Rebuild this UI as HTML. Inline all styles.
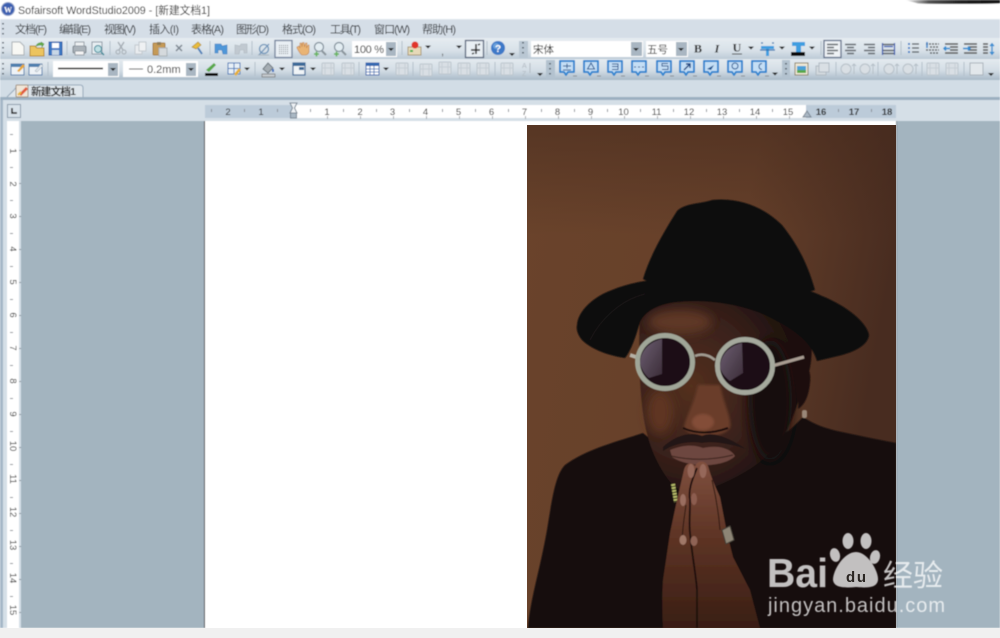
<!DOCTYPE html>
<html><head><meta charset="utf-8"><style>
html,body{margin:0;padding:0;background:#fff;width:1000px;height:638px;overflow:hidden}
svg{display:block}
text{font-family:"Liberation Sans","Noto Sans CJK SC",sans-serif}
.m{font-size:11px;fill:#26292d}
.r{font-size:9.5px;fill:#222;text-anchor:middle}
</style></head><body>
<svg width="1000" height="638" viewBox="0 0 1000 638" xmlns="http://www.w3.org/2000/svg">
<defs>
<linearGradient id="t1" x1="0" y1="0" x2="0" y2="1"><stop offset="0" stop-color="#e6ecf1"/><stop offset=".6" stop-color="#d8e1e8"/><stop offset="1" stop-color="#bccad6"/></linearGradient>
<linearGradient id="t2" x1="0" y1="0" x2="0" y2="1"><stop offset="0" stop-color="#e4eaef"/><stop offset=".55" stop-color="#d3dde5"/><stop offset="1" stop-color="#a9bac8"/></linearGradient>
<linearGradient id="bg" x1="0" y1="0" x2="1" y2="0.25"><stop offset="0" stop-color="#6a432b"/><stop offset=".6" stop-color="#66402a"/><stop offset="1" stop-color="#482c20"/></linearGradient>
<linearGradient id="topd" x1="0" y1="0" x2="0" y2="1"><stop offset="0" stop-color="#3f261b" stop-opacity=".45"/><stop offset="1" stop-color="#3f261b" stop-opacity="0"/></linearGradient>
<linearGradient id="sm" x1="0" y1="0" x2="1" y2="0"><stop offset="0" stop-color="#fff"/><stop offset=".25" stop-color="#555"/><stop offset=".6" stop-color="#222"/><stop offset="1" stop-color="#111"/></linearGradient>
<radialGradient id="skin" cx=".3" cy=".45" r=".65"><stop offset="0" stop-color="#54301f"/><stop offset=".6" stop-color="#38201a"/><stop offset="1" stop-color="#1b0f0d"/></radialGradient>
<linearGradient id="hand" x1="0" y1="0" x2="0" y2="1"><stop offset="0" stop-color="#80503f"/><stop offset=".45" stop-color="#5e3425"/><stop offset="1" stop-color="#391e14"/></linearGradient>
<linearGradient id="lens" x1="0" y1="0" x2="1" y2="1"><stop offset="0" stop-color="#6d6072"/><stop offset="1" stop-color="#3b2c38"/></linearGradient>
<filter id="b1"><feGaussianBlur stdDeviation=".55"/></filter>
<filter id="b2" x="-50%" y="-50%" width="200%" height="200%"><feGaussianBlur stdDeviation="1.300"/></filter>
<filter id="b3" x="-100%" y="-100%" width="300%" height="300%"><feGaussianBlur stdDeviation="5"/></filter>
<g id="ar"><path d="M-3 -1.500h6l-3 3z" fill="#222"/></g>
<g id="gr"><path d="M0 -6v2M0 -1v2M0 4v2" stroke="#44505c" stroke-width="1.600" stroke-dasharray="1.500 1"/></g>
<g id="cb"><path d="M-7 -7h14v11h-6l-2 3-2-3h-4z" fill="#c4def5" stroke="#2f86d0" stroke-width="2" stroke-linejoin="round"/><path d="M6 8h4" stroke="#8a8f94"/></g>
<g id="gi"><rect x="-6" y="-6" width="12" height="12" rx="1" fill="#d9dfe4" stroke="#bcc6ce"/><path d="M-3 -6v12M3 -6v12M-6 -1h12" stroke="#c6ced5"/></g>
<g id="gu"><circle cx="-2" cy="0" r="5" fill="#d9dfe4" stroke="#b5bfc7"/><path d="M6 5v-10M4 -3l2 -2 2 2" stroke="#b5bfc7" fill="none"/></g>
</defs>

<g filter="url(#b1)">
<!-- title -->
<rect width="1000" height="19" fill="#fff"/>
<path d="M905 0h95v3.500q-50 1-82 0z" fill="url(#sm)"/>
<circle cx="8" cy="9" r="6.500" fill="#3a5fb0"/><circle cx="8" cy="9" r="6.500" fill="none" stroke="#8d9fc8"/>
<text x="8" y="12.500" font-size="8" font-weight="bold" fill="#fff" text-anchor="middle" style="font-family:'Liberation Serif',serif">W</text>
<text x="18" y="14" font-size="11" fill="#1c1c1c" textLength="192" lengthAdjust="spacingAndGlyphs">Sofairsoft WordStudio2009 - [新建文档1]</text>

<!-- menu -->
<rect y="19" width="1000" height="19" fill="#d5dee7"/>
<rect y="19" width="1000" height="1" fill="#dfe6ec"/>
<use href="#gr" x="3" y="29"/>
<text class="m" x="15" y="33" textLength="32">文档(F)</text>
<text class="m" x="59" y="33" textLength="32">编辑(E)</text>
<text class="m" x="104" y="33" textLength="32">视图(V)</text>
<text class="m" x="149" y="33" textLength="30">插入(I)</text>
<text class="m" x="191" y="33" textLength="33">表格(A)</text>
<text class="m" x="236" y="33" textLength="33">图形(D)</text>
<text class="m" x="282" y="33" textLength="34">格式(O)</text>
<text class="m" x="330" y="33" textLength="31">工具(T)</text>
<text class="m" x="374" y="33" textLength="36">窗口(W)</text>
<text class="m" x="422" y="33" textLength="34">帮助(H)</text>

<!-- toolbars -->
<rect y="38" width="1000" height="21" fill="url(#t1)"/>
<rect y="59" width="1000" height="21" fill="url(#t2)"/>
<rect y="80" width="1000" height="18" fill="#d2dde6"/>
<rect y="97" width="1000" height="3" fill="#9bafc0"/>
<rect y="100" width="1000" height="21" fill="#d5dfe7"/>

<!-- row 1 -->
<use href="#gr" x="3" y="48"/>
<path d="M12 42h8l4 4v9h-12z" fill="#f8f8f4" stroke="#aab0b4"/>
<path d="M30 46h5l2 2h7v8h-14z" fill="#ecc45e" stroke="#b58a2c"/><path d="M36 46q2-4 6-3l-1-1 3 2-2 3v-2q-3 0-6 1z" fill="#68b04a" stroke="#4d8f38" stroke-width=".6"/>
<path d="M49 42h13v13h-13z" fill="#3c78c4" stroke="#1f5aa8"/><rect x="52" y="43" width="7" height="5" fill="#fff"/><rect x="52" y="50" width="7" height="5" fill="#c8d7e6"/>
<path d="M67 41v14" stroke="#b3c0cb"/>
<rect x="73" y="46" width="13" height="7" rx="1.500" fill="#aab2b9" stroke="#7a848c"/><rect x="75" y="42" width="9" height="4" fill="#eef1f3" stroke="#959ea6"/><rect x="75" y="51" width="9" height="4" fill="#f4f4f4" stroke="#959ea6"/>
<rect x="92" y="42" width="10" height="12" fill="#e8eef2" stroke="#8d9aa5"/><circle cx="98" cy="49" r="3.500" fill="#bfe0e4" stroke="#3e8a9a"/><path d="M101 52l3 3" stroke="#3e8a9a" stroke-width="1.500"/>
<path d="M110 41v14" stroke="#b3c0cb"/>
<path d="M118 42l5 8M124 42l-5 8" stroke="#a3abb2" stroke-width="1.300"/><circle cx="118" cy="52" r="2" fill="none" stroke="#a3abb2"/><circle cx="124" cy="52" r="2" fill="none" stroke="#a3abb2"/>
<rect x="135" y="45" width="7" height="9" fill="#e9ecef" stroke="#c2c9cf"/><rect x="139" y="42" width="7" height="9" fill="#eff1f3" stroke="#c2c9cf"/>
<rect x="153" y="43" width="12" height="12" rx="1" fill="#c59a57" stroke="#a67e40"/><rect x="157" y="42" width="4" height="3" fill="#8d7a56"/><rect x="159" y="48" width="8" height="8" fill="#d5dadd" stroke="#aab2b8"/>
<path d="M176 45l6 6M182 45l-6 6" stroke="#7c8690" stroke-width="1.500"/>
<path d="M192 47l6-5 3 3-5 4z" fill="#e8bc3c" stroke="#b08a20" stroke-width=".7"/><path d="M198 48l4 6" stroke="#4f80b8" stroke-width="2"/>
<path d="M210 41v14" stroke="#b3c0cb"/>
<path d="M215 44h6l1 2 5-1v9h-4l-1-4h-4v3h-3z" fill="#4f97d8" stroke="#3a7cbd" stroke-width=".6"/>
<path d="M247 44h-6l-1 2-5-1v9h4l1-4h4v3h3z" fill="#c1c9d0" stroke="#aeb7bf" stroke-width=".6"/>
<path d="M252 41v14" stroke="#b3c0cb"/>
<circle cx="264" cy="49" r="4.500" fill="none" stroke="#6c93b8" stroke-width="1.300"/><path d="M259 55l10-11" stroke="#6c93b8" stroke-width="1.300"/><path d="M258 55h11" stroke="#a8b4be"/>
<rect x="275" y="40.500" width="17" height="17" fill="#e9eff4" stroke="#6f7f99" stroke-width="1.300"/>
<path d="M279 45.500h9M279 47.500h9M279 49.500h9M279 51.500h9M279 53.500h9" stroke="#7b8288" stroke-dasharray="1 1"/>
<path d="M297 47l2-1 1 2v-5h1.500l.5 4 .5-4.500h1.500l.5 4.500 1-4h1.500l-.5 5 1.500-3h1v7q-1 3-4 3h-3q-2-1-5-7z" fill="#e9b475" stroke="#c1834d" stroke-width=".6"/>
<circle cx="319" cy="47" r="4.500" fill="#e3edf2" stroke="#7f8d98" stroke-width="1.200"/><path d="M322 51l4 4" stroke="#8a949c" stroke-width="2"/><path d="M314 54h5M316.500 51.500v5" stroke="#63b25a" stroke-width="1.500"/>
<circle cx="339" cy="47" r="4.500" fill="#e3edf2" stroke="#7f8d98" stroke-width="1.200"/><path d="M342 51l4 4" stroke="#8a949c" stroke-width="2"/><path d="M334 54h5M336.500 51.500v5" stroke="#63b25a" stroke-width="1.500"/>
<rect x="352" y="41" width="45" height="16" fill="#fff"/><rect x="386" y="42" width="10" height="14" fill="#a9b6c2"/><use href="#ar" x="391" y="49.500"/>
<text x="354" y="53" font-size="11" fill="#222" textLength="30">100 %</text>
<path d="M402 41v14" stroke="#b3c0cb"/>
<rect x="408" y="47" width="13" height="8" fill="#e6d9b8" stroke="#aa9a78"/><circle cx="415" cy="45" r="3.500" fill="#e0342c"/><rect x="410" y="50" width="3" height="2" fill="#3cb04a"/>
<use href="#ar" x="428" y="47"/>
<text x="441" y="55" font-size="11" fill="#555">,</text>
<use href="#ar" x="459" y="47"/>
<rect x="465.500" y="40.500" width="18" height="17" fill="#e9eff4" stroke="#56637a" stroke-width="1.300"/>
<path d="M476 44v10M471 50h9M478 45l2-1M472 54l2-1" stroke="#222" stroke-width="1.500"/>
<path d="M487 41v14" stroke="#b3c0cb"/>
<circle cx="498" cy="48" r="7" fill="#3c79c8"/><circle cx="496" cy="46" r="3" fill="#7fb0e4" opacity=".7"/><text x="498" y="52" font-size="10" font-weight="bold" fill="#fff" text-anchor="middle">?</text>
<path d="M509 53h6l-3 3z" fill="#222"/>
<rect x="519" y="41" width="9" height="17" fill="#b9c7d3"/><use href="#gr" x="523" y="48"/>
<rect x="531" y="41" width="112" height="16" fill="#fff"/><rect x="631" y="42" width="11" height="14" fill="#a9b6c2"/><use href="#ar" x="636" y="49.500"/>
<text x="533" y="53" font-size="10.500" fill="#222">宋体</text>
<rect x="646" y="41" width="42" height="16" fill="#fff"/><rect x="676" y="42" width="11" height="14" fill="#a9b6c2"/><use href="#ar" x="681" y="49.500"/>
<text x="647" y="53" font-size="10.500" fill="#222">五号</text>
<text x="698" y="52.500" font-size="12" font-weight="bold" fill="#222" text-anchor="middle" style="font-family:'Liberation Serif',serif">B</text>
<text x="717" y="52.500" font-size="12" font-style="italic" font-weight="bold" fill="#222" text-anchor="middle" style="font-family:'Liberation Serif',serif">I</text>
<text x="737" y="51.500" font-size="12" font-weight="bold" fill="#222" text-anchor="middle" style="font-family:'Liberation Serif',serif">U</text><path d="M732 54h10" stroke="#333"/>
<use href="#ar" x="751" y="48"/>
<path d="M761 46h13v3h-5v7h-3v-7h-5z" fill="#3f9ee0"/><path d="M761 43h2M772 43h2M760 50h15" stroke="#2a6fb0" stroke-width="1.200"/>
<use href="#ar" x="782" y="48"/>
<path d="M792 42h13v4h-4v7h-5v-7h-4z" fill="#3f9ee0"/><rect x="791" y="52" width="14" height="4" fill="#111"/>
<use href="#ar" x="812" y="48"/>
<path d="M821 41v14" stroke="#b3c0cb"/>
<rect x="824" y="40.500" width="17" height="17" fill="#eef2f5" stroke="#5f6d88" stroke-width="1.300"/>
<path d="M827 44.500h11M827 47.500h7M827 50.500h11M827 53.500h7" stroke="#60666c" stroke-width="1.500"/>
<path d="M845 44.500h11M847 47.500h7M845 50.500h11M847 53.500h7" stroke="#60666c" stroke-width="1.500"/>
<path d="M864 44.500h11M868 47.500h7M864 50.500h11M868 53.500h7" stroke="#60666c" stroke-width="1.500"/>
<path d="M883 44.500h11M883 50.500h11M883 53.500h11" stroke="#60666c" stroke-width="1.500"/><path d="M882.500 43v12M894.500 43v12M884 46.500h9" stroke="#2f55b0" stroke-width="1.200"/>
<path d="M901 41v14" stroke="#b3c0cb"/>
<path d="M908 44h2M908 48h2M908 52h2" stroke="#3a80c8" stroke-width="2"/><path d="M912 44h7M912 48h7M912 52h7" stroke="#4a5056" stroke-width="1.300"/>
<path d="M926 44h13M930 47h9M926 50h13M930 53h9" stroke="#333" stroke-width="1.300" stroke-dasharray="2 1"/><path d="M927 42v6" stroke="#2d80c8" stroke-width="1.500"/>
<path d="M945 44h13M950 47h8M950 50h8M945 53h13" stroke="#555" stroke-width="1.400"/><path d="M950 48.500h-6M946 46.500l-2 2 2 2" stroke="#2d8ad0" stroke-width="1.500" fill="none"/>
<path d="M964 44h13M969 47h8M969 50h8M964 53h13" stroke="#555" stroke-width="1.400"/><path d="M963 48.500h7M968 46.500l2 2-2 2" stroke="#2d8ad0" stroke-width="1.500" fill="none"/>
<path d="M983 44h5M983 47h5M983 50h5M983 53h5" stroke="#555" stroke-width="1.400"/><path d="M992 43v12M990 46l2-2 2 2M990 52l2 2 2-2" stroke="#2d8ad0" stroke-width="1.300" fill="none"/>

<!-- row 2 -->
<use href="#gr" x="3" y="69"/>
<rect x="11" y="64" width="13" height="11" fill="#eef3f7" stroke="#4f7fae"/><rect x="11" y="64" width="13" height="3" fill="#4f7fae"/><path d="M17 71l6-7 2 2-6 6z" fill="#e8a838"/>
<rect x="29" y="64" width="13" height="11" fill="#eef3f7" stroke="#4f7fae"/><rect x="29" y="64" width="13" height="3" fill="#4f7fae"/><path d="M35 71l6-7 2 2-6 6z" fill="#dfe6ec" stroke="#8a98a5" stroke-width=".5"/>
<path d="M48 62v14" stroke="#b3c0cb"/>
<rect x="53" y="61" width="66" height="16" fill="#fff"/><path d="M58 68.500h45" stroke="#111" stroke-width="1.500"/><rect x="108" y="63" width="10" height="13" fill="#a9b6c2"/><use href="#ar" x="113" y="69.500"/>
<rect x="123" y="61" width="75" height="16" fill="#fff"/><path d="M129 69h14" stroke="#444"/><text x="147" y="73" font-size="11" fill="#222">0.2mm</text><rect x="186" y="63" width="10" height="13" fill="#a9b6c2"/><use href="#ar" x="191" y="69.500"/>
<path d="M206 70l8-7 2 2-7 7z" fill="#58a84a"/><rect x="205" y="73" width="13" height="3" fill="#111"/>
<rect x="228" y="63" width="12" height="11" fill="#e8f0f7" stroke="#3f78b8"/><path d="M234 63v11M228 68.500h12" stroke="#3f78b8"/><path d="M234 74l5-6 2 2-5 6z" fill="#e6b038"/>
<use href="#ar" x="247" y="69"/>
<path d="M255 62v14" stroke="#b3c0cb"/>
<path d="M263 69l5-6 5 5-5 5z" fill="#a5adb3" stroke="#6e7880"/><rect x="262" y="74" width="13" height="3" fill="#c6cbcf" stroke="#666" stroke-width=".6"/><path d="M273 69v3" stroke="#3a70c0" stroke-width="2"/>
<use href="#ar" x="282" y="69"/>
<rect x="293" y="63" width="12" height="12" fill="#f0f4f7" stroke="#3c6a98" stroke-width="1.200"/><rect x="293" y="63" width="12" height="3" fill="#3c6a98"/><rect x="299" y="67" width="5" height="3" fill="#3c6a98"/>
<use href="#ar" x="313" y="69"/>
<use href="#gi" x="328" y="69"/><use href="#gi" x="348" y="69"/>
<path d="M359 62v14" stroke="#b3c0cb"/>
<rect x="366" y="63" width="13" height="12" fill="#fff" stroke="#3468b0"/><rect x="366" y="63" width="13" height="3" fill="#3468b0"/><path d="M366 69h13M366 72h13M370 66v9M374 66v9" stroke="#3468b0" stroke-width=".8"/>
<use href="#ar" x="386" y="69"/>
<use href="#gi" x="402" y="69"/>
<path d="M413 62v14" stroke="#b3c0cb"/>
<use href="#gi" x="426" y="70"/><use href="#gi" x="445" y="68"/><use href="#gi" x="464" y="69"/><use href="#gi" x="483" y="69"/>
<path d="M495 62v14" stroke="#b3c0cb"/>
<use href="#gi" x="507" y="69"/>
<text x="522" y="68" font-size="7" fill="#b1bac2">A</text><text x="522" y="76" font-size="7" fill="#b1bac2">Z</text><path d="M530 63v10" stroke="#b1bac2"/>
<path d="M537 73h6l-3 3z" fill="#222"/>
<rect x="546" y="60" width="9" height="19" fill="#b3c2cf"/><use href="#gr" x="550" y="69"/>
<use href="#cb" x="567" y="68"/><use href="#cb" x="591" y="68"/><use href="#cb" x="615" y="68"/><use href="#cb" x="639" y="68"/><use href="#cb" x="664" y="68"/><use href="#cb" x="687" y="68"/><use href="#cb" x="711" y="68"/><use href="#cb" x="735" y="68"/><use href="#cb" x="759" y="68"/>
<path d="M563 66h8M567 63.500v5M563 70h8" stroke="#1f5590"/><path d="M591 63l-3.500 6h7z" fill="none" stroke="#1f5590"/><path d="M612 64h6v2.500h-6M618 66.500v3h-6" fill="none" stroke="#1f5590"/><path d="M634 67h2M638 67h2M642 67h2" stroke="#1f5590"/><path d="M668 63.500h-6v2.500h6v3.500h-6" fill="none" stroke="#1f5590"/><path d="M684 70l6-6M686 64h4v4" fill="none" stroke="#1a4480" stroke-width="1.400"/><path d="M707 69l7-4-3 5z" fill="#1f5590"/><circle cx="735" cy="66" r="3" fill="none" stroke="#1f5590"/><path d="M762 63.500a3 3 0 1 0 0 6" fill="none" stroke="#1f5590"/>
<use href="#ar" x="775" y="74"/>
<rect x="782" y="60" width="8" height="19" fill="#b3c2cf"/><use href="#gr" x="786" y="69"/>
<rect x="795" y="63" width="13" height="12" fill="#efe8d6" stroke="#8c8268"/><rect x="797" y="66" width="9" height="7" fill="#4ba0d8"/><rect x="797" y="70" width="9" height="3" fill="#58a84a"/>
<rect x="816" y="66" width="10" height="9" fill="#d3d9de" stroke="#b0bac2"/><rect x="819" y="63" width="10" height="9" fill="#d9dfe4" stroke="#b0bac2"/>
<path d="M836 62v14" stroke="#b3c0cb"/>
<use href="#gu" x="848" y="69"/><use href="#gu" x="867" y="69"/>
<path d="M878 62v14" stroke="#b3c0cb"/>
<use href="#gu" x="891" y="69"/><use href="#gu" x="910" y="69"/>
<path d="M922 62v14" stroke="#b3c0cb"/>
<use href="#gi" x="933" y="69"/><use href="#gi" x="952" y="69"/>
<path d="M964 62v14" stroke="#b3c0cb"/>
<rect x="970" y="63" width="13" height="12" fill="#e2e7eb" stroke="#aab4bc"/>
<path d="M988 73h6l-3 3z" fill="#222"/>

<!-- tab -->
<path d="M7 97l7-7q3-4 6-5h60q3 0 3 3v9" fill="#dfe6ec" stroke="#94a8ba"/>
<rect x="16" y="85" width="12" height="12" rx="1" fill="#f0e6d8" stroke="#a09080"/><path d="M19 94l7-7 2 2-7 7z" fill="#e05a3c"/><path d="M18 95l3-3" stroke="#e8b838" stroke-width="2"/>
<text x="31" y="95" font-size="10.500" font-weight="bold" fill="#222" textLength="45">新建文档1</text>

<!-- work area -->
<rect x="0" y="121" width="1000" height="507" fill="#a3b4bf"/>
<rect x="0" y="121" width="21" height="507" fill="#d5dfe7"/>
<rect x="0" y="100" width="3" height="528" fill="#a5b7c7"/>
<rect x="7" y="121" width="12" height="507" fill="#fff"/>
<rect x="205" y="121" width="691" height="507" fill="#fff"/>
<rect x="204" y="121" width="1" height="507" fill="#333"/>
<rect x="896" y="121" width="1" height="507" fill="#7d8a94"/>

<!-- corner -->
<rect x="7.500" y="104.500" width="13" height="13" fill="#d8e2ea" stroke="#8d9cab"/><path d="M12 108v5h5" stroke="#111" stroke-width="1.500" fill="none"/>

<!-- h ruler -->
<rect x="205" y="105" width="691" height="13" fill="#bccbd9"/>
<rect x="294" y="105" width="512" height="13" fill="#fff"/>
<text class="r" x="228" y="115">2</text><text class="r" x="261" y="115">1</text>
<text class="r" x="327" y="115">1</text><text class="r" x="360" y="115">2</text><text class="r" x="392.500" y="115">3</text><text class="r" x="425.500" y="115">4</text><text class="r" x="458.500" y="115">5</text><text class="r" x="491.500" y="115">6</text><text class="r" x="524.500" y="115">7</text><text class="r" x="557.500" y="115">8</text><text class="r" x="590.500" y="115">9</text><text class="r" x="623.500" y="115">10</text><text class="r" x="656.500" y="115">11</text><text class="r" x="689" y="115">12</text><text class="r" x="722" y="115">13</text><text class="r" x="755" y="115">14</text><text class="r" x="788" y="115">15</text><text class="r" x="821" y="115" font-weight="bold">16</text><text class="r" x="854" y="115" font-weight="bold">17</text><text class="r" x="887" y="115" font-weight="bold">18</text>
<path d="M211.500 109v3M244.500 109v3M277.500 109v3M310.500 109v3M343.500 109v3M376.500 109v3M409.500 109v3M442.500 109v3M475.500 109v3M508.500 109v3M541.500 109v3M574.500 109v3M607.500 109v3M640.500 109v3M673.500 109v3M706.500 109v3M739.500 109v3M772.500 109v3M838.500 109v3M871.500 109v3" stroke="#8a8f94"/>
<path d="M327.500 116v3M360.500 116v3M393.500 116v3M426.500 116v3M459.500 116v3M492.500 116v3M525.500 116v3M558.500 116v3M591.500 116v3M624.500 116v3M657.500 116v3M690.500 116v3M723.500 116v3M756.500 116v3M789.500 116v3" stroke="#a5a9ad"/>
<path d="M290 103h7l-2.500 5 2.500 5h-7l2.500-5z" fill="#eef2f5" stroke="#7a8794"/><rect x="290.500" y="113" width="6" height="5" fill="#aab8c4" stroke="#7a8794"/>
<path d="M803 117l4-6 4 6z" fill="#aab8c4" stroke="#7a8794"/>

<!-- v ruler -->
<text class="r" transform="translate(10 151) rotate(90)">1</text>
<text class="r" transform="translate(10 184) rotate(90)">2</text>
<text class="r" transform="translate(10 216) rotate(90)">3</text>
<text class="r" transform="translate(10 249) rotate(90)">4</text>
<text class="r" transform="translate(10 282) rotate(90)">5</text>
<text class="r" transform="translate(10 315) rotate(90)">6</text>
<text class="r" transform="translate(10 348) rotate(90)">7</text>
<text class="r" transform="translate(10 381) rotate(90)">8</text>
<text class="r" transform="translate(10 414) rotate(90)">9</text>
<text class="r" transform="translate(10 446) rotate(90)">10</text>
<text class="r" transform="translate(10 479) rotate(90)">11</text>
<text class="r" transform="translate(10 512) rotate(90)">12</text>
<text class="r" transform="translate(10 545) rotate(90)">13</text>
<text class="r" transform="translate(10 578) rotate(90)">14</text>
<text class="r" transform="translate(10 610) rotate(90)">15</text>
<path d="M10 134.500h3M10 167.500h3M10 200.500h3M10 233.500h3M10 266.500h3M10 299.500h3M10 332.500h3M10 365.500h3M10 398.500h3M10 431.500h3M10 464.500h3M10 497.500h3M10 530.500h3M10 563.500h3M10 596.500h3" stroke="#8a8f94"/>
<path d="M19 150.500h2M19 183.500h2M19 216.500h2M19 249.500h2M19 282.500h2M19 315.500h2M19 348.500h2M19 381.500h2M19 414.500h2M19 447.500h2M19 480.500h2M19 513.500h2M19 546.500h2M19 579.500h2M19 612.500h2" stroke="#8a959e"/>
</g>

<!-- photo -->
<svg x="527" y="125" width="369" height="503" viewBox="527 125 369 503">
<rect x="527" y="125" width="369" height="503" fill="url(#bg)"/>
<rect x="527" y="125" width="369" height="110" fill="url(#topd)"/>
<g filter="url(#b1)">
<!-- jacket -->
<path d="M528 628C530 600 540 570 547 530C552 500 555 475 565 465C585 450 615 442 643 433L700 480L790 430L803 417C815 425 825 428 837 431C860 436 880 440 896 443V628Z" fill="#130e0e"/>
<!-- face -->
<path d="M640 310C638 360 640 400 645 425C650 450 660 470 672 484C685 498 710 492 745 472C770 458 788 435 797 405C808 380 815 360 810 335C770 300 690 290 640 310Z" fill="url(#skin)"/>
<ellipse cx="770" cy="400" rx="22" ry="60" fill="#150b0a" filter="url(#b3)"/>
<!-- ear / earring -->
<path d="M800 365q12 0 10 18q-2 20-12 26z" fill="#1c0f0c"/>
<rect x="802" y="410" width="5" height="8" rx="2" fill="#9a8778"/>
<!-- forehead glow -->
<ellipse cx="680" cy="322" rx="32" ry="12" fill="#5f3726" filter="url(#b3)"/>
<!-- cheek -->
<ellipse cx="660" cy="412" rx="13" ry="22" fill="#5e3424" filter="url(#b3)"/>
<!-- nose -->
<path d="M698 385C694 405 685 418 684 428C690 438 720 440 730 428C732 418 724 405 720 385Z" fill="#6b3c2a" filter="url(#b2)"/>
<ellipse cx="703" cy="422" rx="11" ry="8" fill="#834e38" filter="url(#b2)"/>
<path d="M683 428q20 9 45 0" stroke="#1a0c09" stroke-width="2" fill="none"/>
<!-- mustache & lips -->
<path d="M663 447C675 436 690 431 702 436C712 431 728 437 746 449C728 443 712 441 702 443C690 441 675 443 663 451Z" fill="#231716"/>
<path d="M670 450C685 444 695 445 703 448C715 445 730 447 735 456C725 467 690 469 672 457Z" fill="#6d463f"/>
<path d="M671 456q30 7 62-1" stroke="#38201b" fill="none"/>
<!-- necklace -->
<path d="M673 484l3 18" stroke="#b9bd6a" stroke-width="4" stroke-dasharray="2 1"/>
<!-- hands -->
<path d="M684 470C686 462 692 462 695 466C698 460 705 460 708 466C712 480 716 488 720 497L727 533L733 557L750 590L760 628H663C662 610 662 595 663 580L670 533L677 500Z" fill="url(#hand)"/>
<path d="M697 468C692 480 688 490 690 500C690 515 689 525 690 533C692 555 696 575 697 590V628" stroke="#1f0f0b" stroke-width="1.800" fill="none"/>
<path d="M686 505C684 520 682 530 682 545M712 480q6 25 8 50" stroke="#2c1710" fill="none"/>
<ellipse cx="691" cy="471" rx="3.500" ry="7" fill="#96685a"/><ellipse cx="703" cy="471" rx="3.500" ry="7" fill="#96685a"/>
<ellipse cx="683" cy="500" rx="3" ry="6" fill="#9a6e60"/><ellipse cx="694" cy="499" rx="3" ry="6" fill="#8c5d50"/>
<ellipse cx="683" cy="540" rx="3.500" ry="5" fill="#a07868"/><ellipse cx="694" cy="541" rx="3.500" ry="5" fill="#8f6455"/>
<path d="M722 530l8-4 4 14-8 4z" fill="#8d8576" stroke="#433c35"/>
<!-- hat -->
<path d="M643 279C650 255 665 230 677 211C685 203 700 204 712 200C740 197 765 208 782 225C798 245 808 265 815 290C770 305 680 300 643 279Z" fill="#110d0e"/>
<path d="M577 325C578 310 595 296 612 290C640 278 680 276 720 280C760 280 800 285 822 296C845 305 867 322 869 335C868 345 855 352 838 356L817 361C812 345 800 333 775 320C745 303 700 298 670 303C655 306 645 312 640 322C635 340 630 352 625 358C605 355 590 348 582 340C578 335 576 330 577 325Z" fill="#0c0a0a"/>
<path d="M590 340C600 320 620 300 645 294" stroke="#1c1719" fill="none"/>
<!-- glasses -->
<path d="M772 366L804 357" stroke="#a89c92" stroke-width="3"/>
<path d="M695 356q10-4 20 4" stroke="#a39c92" stroke-width="2.500" fill="none"/>
<path d="M630 355l6 2" stroke="#b5b0a5" stroke-width="4"/>
<ellipse cx="665" cy="362" rx="27.500" ry="26.500" fill="#1a0f15" stroke="#a0a698" stroke-width="5"/>
<ellipse cx="745" cy="366" rx="27.500" ry="26.500" fill="#1a0f15" stroke="#a5a99d" stroke-width="5"/>
<path d="M662 339C648 342 640 352 640 364C642 370 645 375 649 378L662 374Z" fill="url(#lens)"/>
<path d="M742 343C728 346 720 356 720 368C722 374 726 378 730 381L743 373Z" fill="url(#lens)"/>
</g>
</svg>

<!-- bottom -->
<rect y="628" width="1000" height="10" fill="#f0f0f0"/>

<!-- watermark -->
<g fill="#fff" opacity=".74" filter="url(#b1)">
<text x="767" y="587" font-size="41" font-weight="bold" textLength="61" lengthAdjust="spacingAndGlyphs">Bai</text>
<ellipse cx="848" cy="541" rx="5.500" ry="8"/><ellipse cx="866" cy="541" rx="5.500" ry="8"/><ellipse cx="835" cy="555" rx="5" ry="7" transform="rotate(-15 835 555)"/><ellipse cx="875" cy="557" rx="5" ry="7" transform="rotate(15 875 557)"/>
<path d="M856 552C868 552 879 572 878 580C877 588 867 588 856 587C845 588 834 588 833 580C833 570 844 552 856 552Z"/>
<text x="883" y="586" font-size="30" textLength="60">经验</text>
<text x="768" y="612" font-size="20" textLength="177">jingyan.baidu.com</text>
</g>
<text x="856" y="582" font-size="15" font-weight="bold" fill="#2a2522" text-anchor="middle" textLength="20">du</text>
</svg>
</body></html>
